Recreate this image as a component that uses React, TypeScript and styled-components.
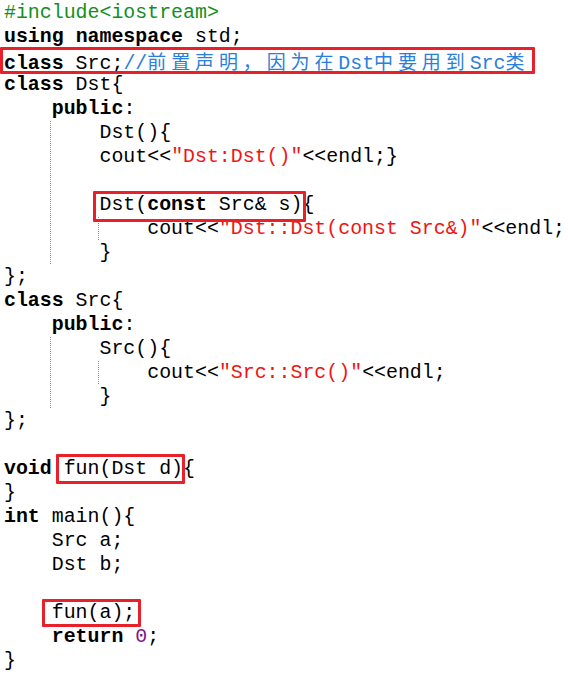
import React from "react";
import styled, { createGlobalStyle } from "styled-components";

const FS = 19.9;
const CW = FS * 0.6;
const LH = 24;
const CJK_FS = 19;

const Global = createGlobalStyle`
  html, body { margin: 0; padding: 0; background: #ffffff; }
`;

const Editor = styled.div`
  width: 568px;
  height: 674px;
  box-sizing: border-box;
  padding: 1px 0 0 4px;
  background: #ffffff;
  font-family: "Liberation Mono", "Noto Sans CJK SC", monospace;
  font-size: ${FS}px;
  color: #000000;
  overflow: hidden;
`;

const Line = styled.div`
  display: block;
  height: ${LH}px;
  line-height: ${LH}px;
  white-space: pre;
`;

const Seg = styled.span<{ $guide: boolean }>`
  display: inline-block;
  vertical-align: top;
  width: ${4 * CW}px;
  height: ${LH}px;
  background-image: ${(p) =>
    p.$guide
      ? "repeating-linear-gradient(to bottom, #8c8c8c 0 1px, transparent 1px 2px)"
      : "none"};
  background-size: 1px 100%;
  background-repeat: no-repeat;
  background-position: ${4 * CW - 2}px 0;
`;

const Kw = styled.span`
  font-weight: bold;
`;
const Str = styled.span`
  color: #f01414;
`;
const Pp = styled.span`
  color: #12901a;
`;
const Cmt = styled.span`
  color: #2a7fdc;
`;
const Cjk = styled.span`
  color: #2a7fdc;
  font-family: "Noto Sans CJK SC", sans-serif;
  font-size: ${CJK_FS}px;
  letter-spacing: ${2 * CW - CJK_FS}px;
`;
const Num = styled.span`
  color: #7d1585;
`;

const Mark = styled.span<{ $t: number; $r: number; $b: number; $l: number }>`
  position: relative;
  display: inline-block;
  vertical-align: top;
  height: ${LH}px;
  &::after {
    content: "";
    position: absolute;
    top: ${(p) => p.$t}px;
    right: ${(p) => p.$r}px;
    bottom: ${(p) => p.$b}px;
    left: ${(p) => p.$l}px;
    border: 3px solid #e8202a;
    border-radius: 1px;
    pointer-events: none;
  }
`;

type Tok =
  | { k: "t" | "kw" | "str" | "pp" | "cmt" | "cjk" | "num"; v: string }
  | { k: "mark"; t: number; r: number; b: number; l: number; c: Tok[] };

type LineData = { indent: number; guides?: number[]; toks: Tok[] };

const t = (v: string): Tok => ({ k: "t", v });
const kw = (v: string): Tok => ({ k: "kw", v });
const str = (v: string): Tok => ({ k: "str", v });
const pp = (v: string): Tok => ({ k: "pp", v });
const cmt = (v: string): Tok => ({ k: "cmt", v });
const cjk = (v: string): Tok => ({ k: "cjk", v });
const num = (v: string): Tok => ({ k: "num", v });
const mark = (t: number, r: number, b: number, l: number, c: Tok[]): Tok => ({
  k: "mark",
  t,
  r,
  b,
  l,
  c,
});

const lines: LineData[] = [
  { indent: 0, toks: [pp("#include<iostream>")] },
  { indent: 0, toks: [kw("using"), t(" "), kw("namespace"), t(" std;")] },
  {
    indent: 0,
    toks: [
      mark(-2, -6, -1, -4, [
        kw("class"),
        t(" Src;"),
        cmt("//"),
        cjk("前置声明，因为在"),
        cmt("Dst"),
        cjk("中要用到"),
        cmt("Src"),
        cjk("类"),
      ]),
    ],
  },
  { indent: 0, toks: [kw("class"), t(" Dst{")] },
  { indent: 1, toks: [kw("public"), t(":")] },
  { indent: 2, guides: [0], toks: [t("Dst(){")] },
  { indent: 2, guides: [0], toks: [t("cout<<"), str('"Dst:Dst()"'), t("<<endl;}")] },
  { indent: 1, guides: [0], toks: [] },
  {
    indent: 2,
    guides: [0],
    toks: [mark(-2, -4, -5, -7, [t("Dst("), kw("const"), t(" Src& s)")]), t("{")],
  },
  {
    indent: 3,
    guides: [0, 1],
    toks: [t("cout<<"), str('"Dst::Dst(const Src&)"'), t("<<endl;")],
  },
  { indent: 2, guides: [0], toks: [t("}")] },
  { indent: 0, toks: [t("};")] },
  { indent: 0, toks: [kw("class"), t(" Src{")] },
  { indent: 1, toks: [kw("public"), t(":")] },
  { indent: 2, guides: [0], toks: [t("Src(){")] },
  {
    indent: 3,
    guides: [0, 1],
    toks: [t("cout<<"), str('"Src::Src()"'), t("<<endl;")],
  },
  { indent: 2, guides: [0], toks: [t("}")] },
  { indent: 0, toks: [t("};")] },
  { indent: 0, toks: [] },
  {
    indent: 0,
    toks: [kw("void"), t(" "), mark(-3, -2, -3, -8, [t("fun(Dst d)")]), t("{")],
  },
  { indent: 0, toks: [t("}")] },
  { indent: 0, toks: [kw("int"), t(" main(){")] },
  { indent: 1, toks: [t("Src a;")] },
  { indent: 1, toks: [t("Dst b;")] },
  { indent: 0, toks: [] },
  { indent: 1, toks: [mark(-2, -6, -2, -10, [t("fun(a);")])] },
  { indent: 1, toks: [kw("return"), t(" "), num("0"), t(";")] },
  { indent: 0, toks: [t("}")] },
];

function renderTok(tok: Tok, i: number): React.ReactNode {
  switch (tok.k) {
    case "t":
      return <React.Fragment key={i}>{tok.v}</React.Fragment>;
    case "kw":
      return <Kw key={i}>{tok.v}</Kw>;
    case "str":
      return <Str key={i}>{tok.v}</Str>;
    case "pp":
      return <Pp key={i}>{tok.v}</Pp>;
    case "cmt":
      return <Cmt key={i}>{tok.v}</Cmt>;
    case "cjk":
      return <Cjk key={i}>{tok.v}</Cjk>;
    case "num":
      return <Num key={i}>{tok.v}</Num>;
    case "mark":
      return (
        <Mark key={i} $t={tok.t} $r={tok.r} $b={tok.b} $l={tok.l}>
          {tok.c.map(renderTok)}
        </Mark>
      );
  }
}

export default function App() {
  return (
    <>
      <Global />
      <Editor>
        {lines.map((ln, i) => (
          <Line key={i}>
            {Array.from({ length: ln.indent }).map((_, s) => (
              <Seg key={s} $guide={!!ln.guides && ln.guides.includes(s)} />
            ))}
            {ln.toks.map(renderTok)}
          </Line>
        ))}
      </Editor>
    </>
  );
}
